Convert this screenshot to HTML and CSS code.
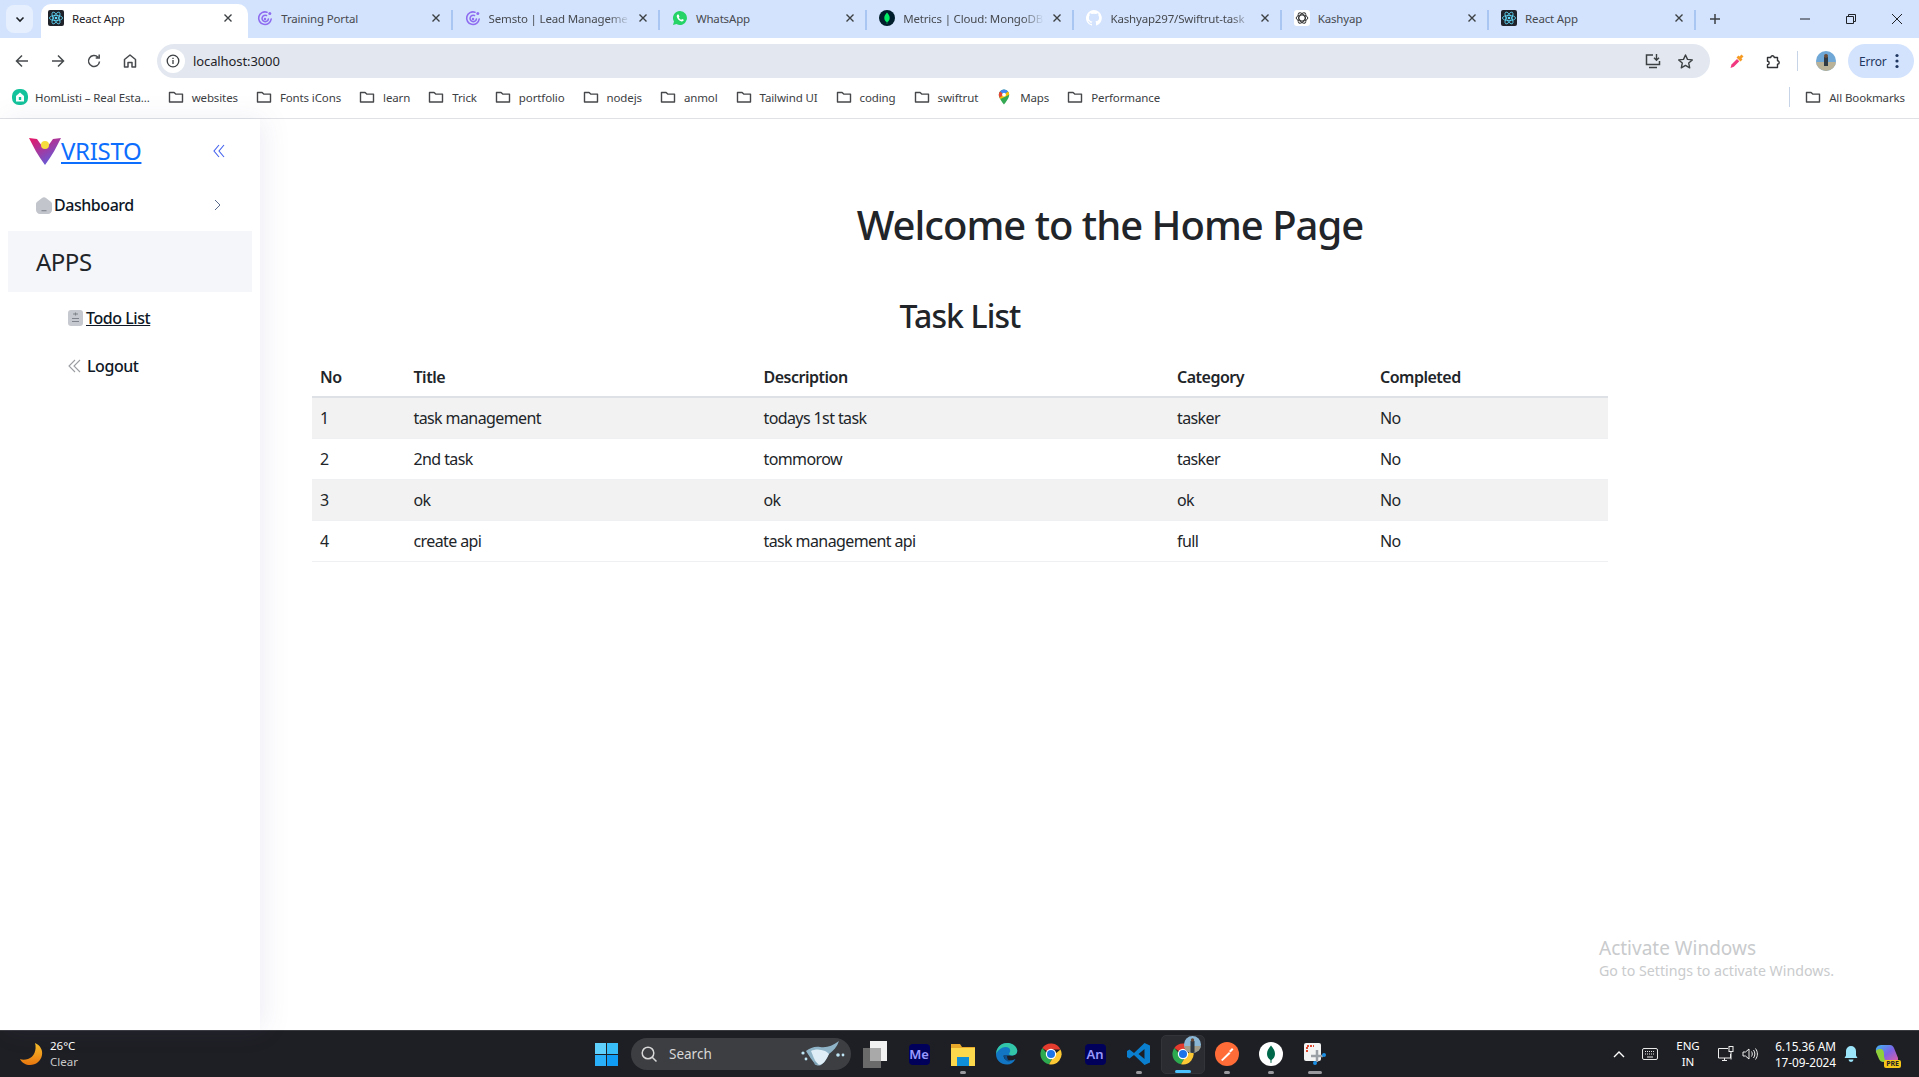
FILE: index.html
```html
<!DOCTYPE html>
<html lang="en">
<head>
    <meta charset="UTF-8">
    <meta name="viewport" content="width=device-width, initial-scale=1.0">
    <title>React App</title>
    <link rel="stylesheet" href="styles.css">
</head>
<body>

    <svg class="defs" width="0" height="0">
        <defs>
            <symbol id="folder" viewBox="0 0 16 16"><path d="M1.5 3.5h4.6l1.6 1.6h6.8v7.9h-13z" fill="none" stroke="#45474a" stroke-width="1.4" stroke-linejoin="round"/></symbol>
            <symbol id="react" viewBox="0 0 16 16"><rect width="16" height="16" rx="2" fill="#20232a"/><g fill="none" stroke="#61dafb" stroke-width=".8"><ellipse cx="8" cy="8" rx="6.6" ry="2.6"/><ellipse cx="8" cy="8" rx="6.6" ry="2.6" transform="rotate(60 8 8)"/><ellipse cx="8" cy="8" rx="6.6" ry="2.6" transform="rotate(120 8 8)"/></g><circle cx="8" cy="8" r="1.3" fill="#61dafb"/></symbol>
            <symbol id="semsto" viewBox="0 0 16 16"><g fill="none" stroke="#8f6df0" stroke-width="1.6" stroke-linecap="round"><path d="M10 2.2A6.3 6.3 0 1 0 14.2 9"/><path d="M9.5 5.5A3.2 3.2 0 1 0 11.4 9"/></g><circle cx="12.8" cy="3.6" r="1.5" fill="#8f6df0"/><circle cx="8" cy="9" r="1.2" fill="#8f6df0"/></symbol>
            <symbol id="close" viewBox="0 0 10 10"><path d="M1.5 1.5l7 7M8.500 1.500l-7 7" stroke="#3c4043" stroke-width="1.4" fill="none"/></symbol>
            <symbol id="chrome" viewBox="0 0 24 24"><path d="M12 12L3.300 6A10.500 10.500 0 0 1 21.500 7.500H12z" fill="#e33b2e"/><path d="M3.300 6A10.500 10.500 0 0 0 10 22.300L14.500 14 12 16z" fill="#2da94f"/><path d="M21.500 7.500A10.500 10.500 0 0 1 10 22.300L16 12z" fill="#fcc934"/><circle cx="12" cy="12" r="5.200" fill="#fff"/><circle cx="12" cy="12" r="4" fill="#1a73e8"/></symbol>
        </defs>
    </svg>

    <header class="browser">
        <div class="tab-strip">
            <button class="tab-search"><svg width="10" height="10" viewBox="0 0 10 10"><path d="M1.500 3.500L5 7l3.500-3.500" fill="none" stroke="#1f2328" stroke-width="1.600"/></svg></button>
            <div class="tab active">
                <svg class="fav" width="16" height="16"><use href="#react"/></svg>
                <span class="tab-title">React App</span>
                <svg class="tab-close" width="10" height="10"><use href="#close"/></svg>
            </div>
            <div class="tab no-sep">
                <svg class="fav" width="16" height="16"><use href="#semsto"/></svg>
                <span class="tab-title">Training Portal</span>
                <svg class="tab-close" width="10" height="10"><use href="#close"/></svg>
            </div>
            <div class="tab">
                <svg class="fav" width="16" height="16"><use href="#semsto"/></svg>
                <span class="tab-title fade">Semsto | Lead Manageme</span>
                <svg class="tab-close" width="10" height="10"><use href="#close"/></svg>
            </div>
            <div class="tab">
                <svg class="fav" width="16" height="16" viewBox="0 0 16 16"><path d="M8 1a7 7 0 0 0-6 10.600L1 15l3.500-.9A7 7 0 1 0 8 1z" fill="#25d366"/><path d="M5.600 4.500c-.5.400-1 1.200-.8 2.300.4 2 2.400 4.200 4.600 4.700 1 .2 1.900-.3 2.200-.9.200-.4.200-.8.100-.9l-1.600-.8-.8.900c-1-.3-2-1.200-2.500-2.300l.7-.8-.7-1.800c-.2-.3-.8-.4-1.200-.2z" fill="#fff"/></svg>
                <span class="tab-title">WhatsApp</span>
                <svg class="tab-close" width="10" height="10"><use href="#close"/></svg>
            </div>
            <div class="tab">
                <svg class="fav" width="16" height="16" viewBox="0 0 16 16"><circle cx="8" cy="8" r="8" fill="#001e2b"/><path d="M8 2.500c1.800 2 2.700 3.600 2.700 5.400 0 2-1.200 3.500-2.400 4.100L8.200 14h-.4l-.1-2C6.500 11.400 5.300 9.900 5.300 7.900c0-1.800.9-3.400 2.700-5.400z" fill="#00ed64"/></svg>
                <span class="tab-title fade">Metrics | Cloud: MongoDB</span>
                <svg class="tab-close" width="10" height="10"><use href="#close"/></svg>
            </div>
            <div class="tab">
                <svg class="fav" width="16" height="16" viewBox="0 0 16 16"><path fill="#fff" d="M8 0a8 8 0 0 0-2.500 15.600c.4.100.5-.2.500-.4v-1.400c-2.200.5-2.700-1-2.700-1-.4-.9-.9-1.200-.9-1.200-.7-.5.100-.5.100-.5.800.1 1.200.8 1.200.8.700 1.200 1.900.9 2.300.7.100-.5.300-.9.500-1.100-1.800-.2-3.600-.9-3.600-4 0-.9.300-1.600.8-2.100-.1-.2-.4-1 .1-2.100 0 0 .7-.2 2.200.8a7.600 7.600 0 0 1 4 0c1.500-1 2.200-.8 2.200-.8.400 1.100.2 1.900.1 2.100.5.600.8 1.300.8 2.100 0 3.100-1.900 3.700-3.700 3.900.3.300.6.800.6 1.500v2.200c0 .2.100.5.600.4A8 8 0 0 0 8 0z"/></svg>
                <span class="tab-title fade">Kashyap297/Swiftrut-task</span>
                <svg class="tab-close" width="10" height="10"><use href="#close"/></svg>
            </div>
            <div class="tab">
                <svg class="fav" width="16" height="16" viewBox="0 0 16 16"><rect width="16" height="16" rx="3" fill="#fff"/><g fill="none" stroke="#333" stroke-width="1"><ellipse cx="8" cy="8" rx="5.800" ry="3"/><ellipse cx="8" cy="8" rx="5.800" ry="3" transform="rotate(60 8 8)"/><ellipse cx="8" cy="8" rx="5.800" ry="3" transform="rotate(120 8 8)"/></g></svg>
                <span class="tab-title">Kashyap</span>
                <svg class="tab-close" width="10" height="10"><use href="#close"/></svg>
            </div>
            <div class="tab">
                <svg class="fav" width="16" height="16"><use href="#react"/></svg>
                <span class="tab-title">React App</span>
                <svg class="tab-close" width="10" height="10"><use href="#close"/></svg>
            </div>
            <svg class="new-tab" width="12" height="12" viewBox="0 0 12 12"><path d="M6 1v10M1 6h10" stroke="#3c4043" stroke-width="1.500"/></svg>
            <div class="window-controls">
                <svg width="12" height="12" viewBox="0 0 12 12"><path d="M1 6h10" stroke="#1f2328"/></svg>
                <svg width="12" height="12" viewBox="0 0 12 12"><path d="M1.500 3.500h7v7h-7zM3.500 3.500V1.500h7v7h-2" fill="none" stroke="#1f2328"/></svg>
                <svg width="12" height="12" viewBox="0 0 12 12"><path d="M1 1l10 10M11 1L1 11" stroke="#1f2328"/></svg>
            </div>
        </div>

        <div class="toolbar">
            <div class="nav-buttons">
                <svg width="16" height="16" viewBox="0 0 16 16"><path d="M14 8H2.500M8 2.500L2.500 8 8 13.500" fill="none" stroke="#474a4d" stroke-width="1.500"/></svg>
                <svg width="16" height="16" viewBox="0 0 16 16"><path d="M2 8h11.500M8 2.500L13.500 8 8 13.500" fill="none" stroke="#474a4d" stroke-width="1.500"/></svg>
                <svg width="16" height="16" viewBox="0 0 16 16"><path d="M13.500 8.500A5.500 5.500 0 1 1 12 4.200M13.200 1.500v3.500H9.700" fill="none" stroke="#474a4d" stroke-width="1.500"/></svg>
                <svg width="16" height="16" viewBox="0 0 16 16"><path d="M2.500 14V6.500L8 2l5.500 4.500V14h-3.500V9.500H6V14z" fill="none" stroke="#474a4d" stroke-width="1.500" stroke-linejoin="round"/></svg>
            </div>
            <div class="omnibox">
                <span class="site-info"><svg width="16" height="16" viewBox="0 0 16 16"><circle cx="8" cy="8" r="5.800" fill="none" stroke="#3c4043" stroke-width="1.300"/><path d="M8 7v4M8 4.700v1.300" stroke="#3c4043" stroke-width="1.300"/></svg></span>
                <span class="url">localhost:3000</span>
                <svg class="omni-install" width="18" height="18" viewBox="0 0 18 18"><path d="M9 3H2.500v9.500h13V9M5 15.500h8" fill="none" stroke="#3c4043" stroke-width="1.500"/><path d="M12.500 2v6M10 5.800l2.500 2.500L15 5.800" fill="none" stroke="#3c4043" stroke-width="1.400"/></svg>
                <svg width="17" height="17" viewBox="0 0 17 17"><path d="M8.500 2l2 4.400 4.800.5-3.600 3.200 1 4.700-4.200-2.400-4.200 2.400 1-4.700L1.700 6.900l4.800-.5z" fill="none" stroke="#3c4043" stroke-width="1.400" stroke-linejoin="round"/></svg>
            </div>
            <div class="toolbar-right">
                <svg class="picker" width="16" height="16" viewBox="0 0 16 16"><path d="M1.500 15L2.500 11.500 8 6l2.300 2.300-5.500 5.500z" fill="#f0377f"/><path d="M7.500 4.500l2-2 1 1 2-2 2 2-2 2 1 1-2 2z" fill="#f59a23"/></svg>
                <svg class="puzzle" width="17" height="17" viewBox="0 0 17 17"><path d="M2.500 4.500h3.300a1.700 1.700 0 1 1 3.400 0h3.300v3.300a1.700 1.700 0 1 1 0 3.400v3.300H2.500v-2.800a1.700 1.700 0 0 0 0-3.400z" fill="none" stroke="#2f3134" stroke-width="1.400" stroke-linejoin="round"/></svg>
                <span class="toolbar-sep"></span>
                <svg class="avatar" width="20" height="20" viewBox="0 0 20 20"><clipPath id="avatarClip"><circle cx="10" cy="10" r="10"/></clipPath><g clip-path="url(#avatarClip)"><rect width="20" height="20" fill="#6fa8d6"/><rect y="11" width="20" height="9" fill="#b9b198"/><rect x="8" y="6" width="4" height="9" fill="#2f3a45"/><circle cx="10" cy="5" r="2" fill="#6b4a35"/></g></svg>
                <span class="error-pill">Error <svg width="4" height="16" viewBox="0 0 4 16"><circle cx="2" cy="2.500" r="1.600" fill="#1f3760"/><circle cx="2" cy="8" r="1.600" fill="#1f3760"/><circle cx="2" cy="13.500" r="1.600" fill="#1f3760"/></svg></span>
            </div>
        </div>

        <div class="bookmarks">
            <a class="bm bm-first"><svg width="16" height="16" viewBox="0 0 16 16"><rect width="16" height="16" rx="7" fill="#14c29b"/><path d="M8 3.500L12 7v5.500H4V7z" fill="#fff"/><rect x="6.800" y="8" width="2.400" height="3" fill="#14c29b"/></svg>HomListi – Real Esta...</a>
            <a class="bm"><svg width="16" height="16"><use href="#folder"/></svg>websites</a>
            <a class="bm"><svg width="16" height="16"><use href="#folder"/></svg>Fonts iCons</a>
            <a class="bm"><svg width="16" height="16"><use href="#folder"/></svg>learn</a>
            <a class="bm"><svg width="16" height="16"><use href="#folder"/></svg>Trick</a>
            <a class="bm"><svg width="16" height="16"><use href="#folder"/></svg>portfolio</a>
            <a class="bm"><svg width="16" height="16"><use href="#folder"/></svg>nodejs</a>
            <a class="bm"><svg width="16" height="16"><use href="#folder"/></svg>anmol</a>
            <a class="bm"><svg width="16" height="16"><use href="#folder"/></svg>Tailwind UI</a>
            <a class="bm"><svg width="16" height="16"><use href="#folder"/></svg>coding</a>
            <a class="bm"><svg width="16" height="16"><use href="#folder"/></svg>swiftrut</a>
            <a class="bm"><svg width="16" height="16" viewBox="0 0 16 16"><path d="M8 0.500a5.200 5.200 0 0 0-5.200 5.200C2.800 9.500 8 15.500 8 15.500s5.200-6 5.200-9.800A5.200 5.200 0 0 0 8 .5z" fill="#34a853"/><path d="M8 .5a5.200 5.200 0 0 0-4 1.900l4 3.300 4-3.300A5.200 5.200 0 0 0 8 .5z" fill="#4285f4"/><path d="M4 2.400a5.200 5.200 0 0 0-1.200 3.300c0 1 .3 2 .8 3L8 5.700z" fill="#ea4335"/><path d="M12 2.400L8 5.700l-4.400 3c.3.500.5 1 .8 1.400l8.800-4.400A5.200 5.200 0 0 0 12 2.400z" fill="#fbbc04"/><circle cx="8" cy="5.700" r="1.900" fill="#fff"/></svg>Maps</a>
            <a class="bm"><svg width="16" height="16"><use href="#folder"/></svg>Performance</a>
            <span class="bm-spacer"></span>
            <span class="bm-sep"></span>
            <a class="bm bm-all"><svg width="16" height="16"><use href="#folder"/></svg>All Bookmarks</a>
        </div>
    </header>

    <div class="page">
        <aside class="sidebar">
            <div class="brand">
                <a class="logo-link">
                    <svg class="logo" width="32" height="28" viewBox="0 0 32 28">
                        <defs><linearGradient id="logoGrad" x1="0" y1="0" x2=".7" y2="1"><stop offset="0" stop-color="#ea1564"/><stop offset="1" stop-color="#5b5fe0"/></linearGradient></defs>
                        <path d="M0 1l8 1c3 4 5 8 8 8s5-4 8-8l8-1c-4 8-9 18-16 27C9 19 4 9 0 1z" fill="url(#logoGrad)"/>
                        <circle cx="16" cy="8" r="4" fill="#f7dc3d"/>
                    </svg>
                    <span class="logo-text">VRISTO</span>
                </a>
                <svg class="collapse" width="12" height="14" viewBox="0 0 12 14"><path d="M6 1L1 7l5 6M11 1L6 7l5 6" fill="none" stroke="#4361ee" stroke-width="1.100"/></svg>
            </div>
            <div class="nav-item nav-dashboard">
                <svg width="16" height="17" viewBox="0 0 16 17"><path d="M0 7c0-1 .5-1.700 1.200-2.300L6 1C7.200 0 8.800 0 10 1l4.800 3.700C15.500 5.300 16 6 16 7v6c0 2.200-1.800 4-4 4H4c-2.200 0-4-1.800-4-4z" fill="#c2c5cc"/><rect x="5.500" y="13" width="5" height="1.300" fill="#8a8e97"/></svg>
                <span>Dashboard</span>
                <svg class="nav-arrow" width="7" height="12" viewBox="0 0 7 12"><path d="M1 1l5 5-5 5" fill="none" stroke="#5a6a8a" stroke-width="1"/></svg>
            </div>
            <div class="section-title">APPS</div>
            <div class="nav-item nav-sub">
                <svg width="15" height="16" viewBox="0 0 15 16"><rect width="15" height="16" rx="3" fill="#c6c9cf"/><path d="M5 4h5M7.500 2.500v3M4 8.500h7M4 11.500h7" stroke="#7e838c" stroke-width="1.100"/></svg>
                <a class="nav-link">Todo List</a>
            </div>
            <div class="nav-item nav-sub">
                <svg width="13" height="14" viewBox="0 0 13 14"><path d="M7 1L1 7l6 6M12 1L6 7l6 6" fill="none" stroke="#9b9da1" stroke-width="1.100"/></svg>
                <span>Logout</span>
            </div>
        </aside>

        <main class="main">
            <h1>Welcome to the Home Page</h1>
            <section class="task-section">
                <h2>Task List</h2>
                <table class="task-table">
                    <thead>
                        <tr><th class="col-no">No</th><th class="col-title">Title</th><th class="col-desc">Description</th><th class="col-cat">Category</th><th>Completed</th></tr>
                    </thead>
                    <tbody>
                        <tr><td>1</td><td>task management</td><td>todays 1st task</td><td>tasker</td><td>No</td></tr>
                        <tr><td>2</td><td>2nd task</td><td>tommorow</td><td>tasker</td><td>No</td></tr>
                        <tr><td>3</td><td>ok</td><td>ok</td><td>ok</td><td>No</td></tr>
                        <tr><td>4</td><td>create api</td><td>task management api</td><td>full</td><td>No</td></tr>
                    </tbody>
                </table>
            </section>
        </main>

        <div class="activate">
            <div class="activate-title">Activate Windows</div>
            <div class="activate-sub">Go to Settings to activate Windows.</div>
        </div>
    </div>

    <footer class="taskbar">
        <div class="weather">
            <svg width="23" height="23" viewBox="0 0 23 23"><defs><linearGradient id="moonGrad" x1="0" y1="0" x2="0" y2="1"><stop offset="0" stop-color="#f8c02c"/><stop offset="1" stop-color="#e8760f"/></linearGradient></defs><path d="M15 0c5 2 8 7 7 12-1 6-6 10-12 10-4 0-8-2-10-6 2 1 5 1 8 0 6-2 9-9 7-16z" fill="url(#moonGrad)"/></svg>
            <div class="weather-text"><div>26°C</div><div class="dim">Clear</div></div>
        </div>
        <svg class="start" width="23" height="23" viewBox="0 0 23 23"><rect width="11" height="11" fill="#5fd0fb"/><rect x="12" width="11" height="11" fill="#38bdf8"/><rect y="12" width="11" height="11" fill="#2ab0f9"/><rect x="12" y="12" width="11" height="11" fill="#109cf5"/></svg>
        <div class="search">
            <svg width="18" height="18" viewBox="0 0 18 18"><circle cx="8" cy="8" r="5.800" fill="none" stroke="#d8d8d8" stroke-width="1.500"/><path d="M12.200 12.200L16.500 16.500" stroke="#d8d8d8" stroke-width="1.500"/></svg>
            <span>Search</span>
            <svg class="ray" width="46" height="28" viewBox="0 0 46 28"><path d="M6 11c4-3 9-5 14-4 7 1 12-1 19-6-2 6-6 10-10 13-2 4-4 8-7 10-2 2-5 2-7 0-3-4-6-8-9-13z" fill="#8fb4c8"/><path d="M11 11c4-2 9-2 14 0 2 1 3 2 4 3-2 4-4 8-7 10-2 1-4 1-5-1-3-3-4-8-6-12z" fill="#dfeef6"/><path d="M14 21l4 3-3 1z" fill="#7a9db2"/><circle cx="3" cy="13" r="1.600" fill="#bfe6f5"/><circle cx="6" cy="19" r="1.400" fill="#bfe6f5"/><circle cx="38" cy="15" r="1.800" fill="#bfe6f5"/><circle cx="43" cy="15" r="1.400" fill="#bfe6f5"/></svg>
        </div>
        <div class="task-icons">
            <div class="task-icon">
                <svg width="24" height="27" viewBox="0 0 24 27"><rect y="7" width="18" height="20" fill="#6a6a6a"/><rect x="7" width="17" height="20" fill="#f2f2f2"/><rect x="7" y="7" width="11" height="13" fill="#a9a9a9"/></svg>
            </div>
            <div class="task-icon">
                <span class="adobe">Me</span>
            </div>
            <div class="task-icon running">
                <svg width="24" height="24" viewBox="0 0 24 24"><path d="M0 2h9l2 3h13v19H0z" fill="#e8a92a"/><rect y="6" width="24" height="18" fill="#fcd84d"/><rect x="6" y="15" width="12" height="9" fill="#0f8fd8"/></svg>
            </div>
            <div class="task-icon">
                <svg width="24" height="24" viewBox="0 0 24 24"><path d="M1 12a11 11 0 0 1 21-4.600c1 2.600-.5 6-4.800 6H8.500c0 3 2.500 5 6 5 2 0 4-.5 6-1.500-2 4-5 5.600-8.500 5.600C5.500 22.500 1 18 1 12z" fill="#1276c4"/><path d="M1 12C1.500 5.500 6 1 12 1c5 0 9 2.500 10 6.400.8 2.800-.8 6-4.800 6-2 0-3-.6-3-1.400 0-1.500 1-1.500 1-3.500 0-2-2-3.500-4.500-3.500-4 0-7.700 3-9.700 7z" fill="#32c5a8"/><path d="M9 13.400h3c0 3 1 5 3 6-3.500.5-6-2.500-6-6z" fill="#0b4f8f"/></svg>
            </div>
            <div class="task-icon">
                <svg width="24" height="24"><use href="#chrome"/></svg>
            </div>
            <div class="task-icon">
                <span class="adobe">An</span>
            </div>
            <div class="task-icon running">
                <svg width="24" height="24" viewBox="0 0 24 24"><path d="M17.500 1L23 3.500v17L17.500 23 7 13l-4.500 3.500L0 15V9l2.500-1.500L7 11zM17.500 7l-6 5 6 5z" fill="#0a7fcf"/></svg>
            </div>
            <div class="task-icon active running">
                <svg width="24" height="24"><use href="#chrome"/></svg>
                <svg class="profile-badge" width="17" height="17" viewBox="0 0 17 17"><clipPath id="badgeClip"><circle cx="8.500" cy="8.500" r="8.500"/></clipPath><g clip-path="url(#badgeClip)"><rect width="17" height="17" fill="#8ab7d6"/><rect y="10" width="17" height="7" fill="#a39e8a"/><rect x="6.500" y="5" width="4" height="12" fill="#2f3a45"/><circle cx="8.500" cy="4" r="1.700" fill="#6b4a35"/></g></svg>
            </div>
            <div class="task-icon running">
                <svg width="24" height="24" viewBox="0 0 24 24"><circle cx="12" cy="12" r="12" fill="#ff6c37"/><path d="M6 18l8-8 1.500 1.500-8 7.500zM14 9l3-3 1.500 1.500-3 3z" fill="#fff"/></svg>
            </div>
            <div class="task-icon running">
                <svg width="24" height="24" viewBox="0 0 24 24"><circle cx="12" cy="12" r="12" fill="#fff"/><path d="M12 3.500c2.600 3 4 5.500 4 8.500s-1.800 5-3.400 6l-.2 3h-.8l-.2-3C9.800 17 8 15 8 12s1.400-5.500 4-8.500z" fill="#00684a"/></svg>
            </div>
            <div class="task-icon running wide-dot">
                <svg width="24" height="24" viewBox="0 0 24 24"><rect x="1" y="1" width="17" height="18" rx="2" fill="#f4f4f4"/><path d="M4 10V4h7" fill="none" stroke="#e0492f" stroke-width="2" stroke-dasharray="2 1"/><path d="M14 8v12M8 14h12" stroke="#9aa0a6" stroke-width="2.500"/><circle cx="21" cy="13" r="2" fill="#1a8fe3"/><circle cx="12" cy="21" r="2" fill="#1a8fe3"/></svg>
            </div>
        </div>
        <div class="tray">
            <svg width="12" height="8" viewBox="0 0 12 8"><path d="M1 7l5-5 5 5" fill="none" stroke="#fff" stroke-width="1.400"/></svg>
            <svg class="tray-kb" width="16" height="12" viewBox="0 0 16 12"><rect x=".5" y=".5" width="15" height="11" rx="1.500" fill="none" stroke="#e8e8e8"/><path d="M3 3.500h10M3 6h10" stroke="#e8e8e8" stroke-dasharray="1 1"/><path d="M5 9h6" stroke="#e8e8e8"/></svg>
            <div class="tray-lang"><div>ENG</div><div>IN</div></div>
            <svg class="tray-net" width="16" height="16" viewBox="0 0 16 16"><path d="M10 2.500H.5v9.500h12V8M4 14.500h5M6.500 12v2.500" fill="none" stroke="#eee"/><rect x="11" y=".5" width="4" height="5" fill="none" stroke="#eee"/><path d="M13 5.500v8" stroke="#eee"/></svg>
            <svg class="tray-vol" width="16" height="14" viewBox="0 0 16 14"><path d="M1 5v4h2.500L7 12V2L3.500 5z" fill="none" stroke="#eee"/><path d="M9.500 4.500c1 1.500 1 3.500 0 5M11.500 3c1.800 2.500 1.800 5.500 0 8M13.500 1.500c2.500 3.500 2.500 7.500 0 11" fill="none" stroke="#eee"/></svg>
            <div class="tray-clock"><div>6.15.36 AM</div><div>17-09-2024</div></div>
            <svg class="tray-bell" width="14" height="16" viewBox="0 0 14 16"><path d="M7 0a5 5 0 0 0-5 5v4.500L.5 12h13L12 9.500V5a5 5 0 0 0-5-5z" fill="#9be4fa"/><path d="M4.500 13.500h5a2.500 2.500 0 0 1-5 0z" fill="#9be4fa"/></svg>
            <div class="copilot">
                <svg width="24" height="20" viewBox="0 0 24 20"><defs><linearGradient id="coGrad" x1="0" y1="0" x2="1" y2="1"><stop offset="0" stop-color="#3fb6f0"/><stop offset=".5" stop-color="#7b63e6"/><stop offset="1" stop-color="#e55ea0"/></linearGradient></defs><path d="M6 1h9c2 0 3 1 4 3l4 10c.500 2-1 4-3 4H9c-2 0-3-1-4-3L1 7c-1-3 2-6 5-6z" fill="url(#coGrad)"/><path d="M5 5c3 0 4 2 4 5s0 5 3 8H9c-3 0-4-1-5-3L1 8c-.500-2 2-3 4-3z" fill="#8fcf3a"/></svg>
                <span class="pre">PRE</span>
            </div>
        </div>
    </footer>

</body>
</html>
```

FILE: styles.css
```css
* {
    box-sizing: border-box;
}
html, body {
    height: 100%;
}
body {
    margin: 0;
    height: 100vh;
    display: flex;
    flex-direction: column;
    overflow: hidden;
    background-color: white;
    font-family: "Noto Sans", "Open Sans", sans-serif;
    color: #212529;
}
svg {
    display: block;
    flex-shrink: 0;
}
.defs {
    position: absolute;
}

/* browser chrome */
.browser {
    flex-shrink: 0;
}
.tab-strip {
    height: 38px;
    display: flex;
    align-items: flex-start;
    padding-left: 6px;
    background-color: #d3e3fd;
}
.tab-search {
    width: 27px;
    height: 28px;
    margin-top: 5px;
    margin-right: 8px;
    padding: 0;
    border: none;
    border-radius: 8px;
    background-color: #e6effd;
    display: flex;
    align-items: center;
    justify-content: center;
}
.tab {
    width: 207.3px;
    height: 34px;
    margin-top: 4px;
    padding: 0 15px 6px 9px;
    position: relative;
    display: flex;
    align-items: center;
    font-size: 11.500px;
    letter-spacing: -0.17px;
    color: #474a4f;
}
.tab::after {
    content: "";
    position: absolute;
    right: 3px;
    top: 6px;
    width: 2px;
    height: 20px;
    background-color: #a9c6f3;
}
.tab.active {
    padding-left: 7px;
    background-color: white;
    border-radius: 10px 10px 0 0;
    color: #1f2328;
}
.tab.active::after {
    display: none;
}
.fav {
    margin-right: 8px;
}
.tab-title {
    flex: 1;
    white-space: nowrap;
}
.tab-title.fade {
    -webkit-mask-image: linear-gradient(to right, black 85%, transparent 100%);
    mask-image: linear-gradient(to right, black 85%, transparent 100%);
}
.tab-close {
    margin-left: 8px;
}
.new-tab {
    margin-top: 13px;
    margin-left: 10px;
}
.window-controls {
    margin-left: auto;
    margin-top: 13px;
    padding-right: 16px;
    display: flex;
    gap: 34px;
}

.toolbar {
    height: 40px;
    display: flex;
    align-items: center;
    background-color: white;
    border-radius: 10px 10px 0 0;
    padding-top: 6px;
    padding-left: 14px;
}
.nav-buttons {
    width: 143px;
    display: flex;
    gap: 20px;
}
.omnibox {
    width: 1553px;
    height: 34px;
    display: flex;
    align-items: center;
    background-color: #e3e8f0;
    border-radius: 17px;
    padding: 0 16px 0 4px;
    font-size: 13px;
}
.site-info {
    width: 24px;
    height: 24px;
    border-radius: 12px;
    background-color: white;
    display: flex;
    align-items: center;
    justify-content: center;
    margin-right: 8px;
}
.url {
    flex: 1;
    color: #1f2328;
    letter-spacing: -0.1px;
}
.omni-install {
    margin-right: 15px;
}
.toolbar-right {
    flex: 1;
    display: flex;
    align-items: center;
    padding-left: 19px;
}
.puzzle {
    margin-left: 20px;
}
.toolbar-sep {
    width: 1px;
    height: 20px;
    margin-left: 15px;
    background-color: #c7d4e8;
}
.avatar {
    margin-left: 18px;
}
.error-pill {
    width: 66px;
    height: 34px;
    margin-left: 12px;
    padding: 0 15px 0 11px;
    display: flex;
    align-items: center;
    justify-content: space-between;
    background-color: #d3e3fd;
    border-radius: 17px;
    font-size: 12px;
    letter-spacing: -0.2px;
    color: #1f3760;
}

.bookmarks {
    height: 41px;
    display: flex;
    align-items: center;
    padding-left: 12px;
    padding-right: 14px;
    padding-bottom: 2px;
    background-color: white;
    border-bottom: 1px solid #dfe1e5;
    font-size: 11.500px;
    letter-spacing: -0.12px;
    color: #3c4043;
}
.bm {
    display: flex;
    align-items: center;
    gap: 8px;
    margin-right: 18px;
    white-space: nowrap;
}
.bm-first {
    gap: 7px;
}
.bm-spacer {
    flex: 1;
}
.bm-sep {
    width: 1px;
    height: 20px;
    margin-right: 15px;
    background-color: #c7d4e8;
}
.bm-all {
    margin-right: 0;
}

/* page */
.page {
    flex: 1;
    display: flex;
    position: relative;
    min-height: 0;
}
.sidebar {
    width: 260px;
    flex-shrink: 0;
    padding-top: 18px;
    box-shadow: 5px 0 25px 0 rgba(94, 92, 154, 0.1);
}
.brand {
    height: 28px;
    margin-bottom: 28px;
    padding-left: 29px;
    padding-right: 35px;
    display: flex;
    align-items: center;
    justify-content: space-between;
}
.logo-link {
    display: flex;
    align-items: center;
}
.logo-text {
    font-size: 24px;
    line-height: 32px;
    color: #0d6efd;
    text-decoration: underline;
    letter-spacing: -0.3px;
}
.nav-item {
    display: flex;
    align-items: center;
    font-size: 16px;
    font-weight: 500;
    letter-spacing: -0.45px;
    color: #0e1726;
}
.nav-dashboard {
    height: 24px;
    padding-left: 36px;
    padding-right: 39px;
    gap: 2px;
    margin-bottom: 14px;
}
.nav-arrow {
    margin-left: auto;
}
.section-title {
    margin: 0 8px;
    height: 61px;
    padding-left: 28px;
    display: flex;
    align-items: center;
    background-color: #f5f6fa;
    font-size: 24px;
    font-weight: 400;
    letter-spacing: -0.5px;
}
.nav-sub {
    height: 24px;
    margin-top: 14px;
    margin-bottom: 24px;
    padding-left: 68px;
    gap: 3px;
}
.nav-sub + .nav-sub {
    margin-top: 0;
    gap: 6px;
}
.nav-link {
    text-decoration: underline;
}

.main {
    flex: 1;
    min-width: 0;
    padding-left: 41px;
}
h1 {
    margin: 0;
    padding-top: 82px;
    font-size: 40px;
    line-height: 1.2;
    font-weight: 500;
    letter-spacing: -1px;
    text-align: center;
}
.task-section {
    width: 1296px;
    margin-left: 11px;
    padding-top: 48px;
}
h2 {
    margin: 0 0 21px;
    font-size: 32px;
    line-height: 1.2;
    font-weight: 500;
    letter-spacing: -0.9px;
    text-align: center;
}
.task-table {
    width: 100%;
    border-collapse: collapse;
    table-layout: fixed;
    font-size: 16px;
    letter-spacing: -0.6px;
}
.task-table th {
    height: 41px;
    padding: 9px 8px 7px;
    text-align: left;
    font-weight: 600;
    letter-spacing: -0.5px;
    border-bottom: 2px solid #dee2e6;
}
.task-table td {
    height: 41px;
    padding: 8px;
    border-bottom: 1px solid #eef0f2;
}
.task-table tbody tr:nth-child(odd) {
    background-color: #f2f2f2;
}
.col-no {
    width: 93.500px;
}
.col-title {
    width: 350px;
}
.col-desc {
    width: 413.500px;
}
.col-cat {
    width: 203px;
}

.activate {
    position: absolute;
    left: 1599px;
    top: 816px;
    color: #c9cbcd;
}
.activate-title {
    font-size: 19px;
}
.activate-sub {
    font-size: 14.200px;
}

/* windows taskbar */
.taskbar {
    height: 47px;
    flex-shrink: 0;
    display: flex;
    align-items: center;
    padding-left: 20px;
    background-color: #1e1f24;
    border-top: 1px solid #3a3b40;
    color: white;
    font-size: 11.500px;
}
.weather {
    width: 575px;
    display: flex;
    align-items: center;
    gap: 7px;
    line-height: 16px;
}
.weather-text .dim {
    color: #c9c9c9;
}
.search {
    width: 220px;
    height: 32px;
    margin-left: 13px;
    padding-left: 9px;
    display: flex;
    align-items: center;
    gap: 11px;
    border-radius: 16px;
    background-color: #3d3e42;
    font-size: 13.500px;
    color: #d8d8d8;
}
.ray {
    margin-left: auto;
    margin-right: 5px;
}
.task-icons {
    display: flex;
    margin-left: 2px;
}
.task-icon {
    width: 44px;
    height: 39px;
    position: relative;
    display: flex;
    align-items: center;
    justify-content: center;
}
.task-icon.running::after {
    content: "";
    position: absolute;
    left: 19px;
    bottom: 0;
    width: 6px;
    height: 3px;
    border-radius: 2px;
    background-color: #9a9a9e;
}
.task-icon.wide-dot::after {
    left: 15px;
    width: 14px;
}
.task-icon.active {
    background-color: #2b2c31;
    border: 1px solid #333439;
    border-radius: 5px;
}
.task-icon.active::after {
    left: 13px;
    width: 16px;
    background-color: #4cc2ff;
}
.profile-badge {
    position: absolute;
    top: 0;
    right: 3px;
}
.adobe {
    width: 21px;
    height: 21px;
    border-radius: 4px;
    display: flex;
    align-items: center;
    justify-content: center;
    background-color: #00005b;
    color: #9999ff;
    font-size: 13px;
    font-weight: 600;
}
.tray {
    flex: 1;
    display: flex;
    align-items: center;
    padding-left: 276px;
}
.tray-kb {
    margin-left: 17px;
}
.tray-lang {
    width: 40px;
    margin-left: 10px;
    text-align: center;
    line-height: 16px;
    font-size: 11.500px;
}
.tray-net {
    margin-left: 10px;
}
.tray-vol {
    margin-left: 8px;
}
.tray-clock {
    width: 72px;
    margin-left: 6px;
    text-align: right;
    line-height: 16px;
    font-size: 11.800px;
    letter-spacing: -0.05px;
}
.tray-bell {
    margin-left: 8px;
}
.copilot {
    position: relative;
    margin-left: 17px;
}
.pre {
    position: absolute;
    right: -2px;
    bottom: -4px;
    padding: 0 2px;
    border-radius: 2px;
    background-color: #f5c518;
    color: #1e1f24;
    font-size: 7px;
    font-weight: 700;
    line-height: 8px;
}
```
